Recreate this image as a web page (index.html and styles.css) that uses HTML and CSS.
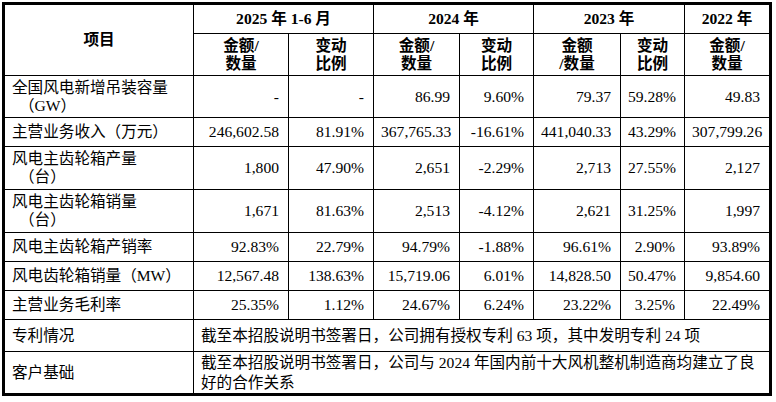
FILE: index.html
```html
<!DOCTYPE html>
<html lang="zh-CN">
<head>
<meta charset="utf-8">
<link rel="stylesheet" href="styles.css">
</head>
<body>
<table class="tbl">
  <colgroup>
    <col class="c1"><col class="c2"><col class="c3"><col class="c4"><col class="c5"><col class="c6"><col class="c7"><col class="c8">
  </colgroup>
  <tr class="h-top">
    <th rowspan="2">项目</th>
    <th colspan="2">2025 年 1-6 月</th>
    <th colspan="2">2024 年</th>
    <th colspan="2">2023 年</th>
    <th>2022 年</th>
  </tr>
  <tr class="h-sub">
    <th>金额/<br>数量</th>
    <th>变动<br>比例</th>
    <th>金额/<br>数量</th>
    <th>变动<br>比例</th>
    <th>金额<br>/数量</th>
    <th>变动<br>比例</th>
    <th>金额/<br>数量</th>
  </tr>
  <tr class="r2">
    <td class="name"><span class="ln">全国风电新增吊装容量</span><span class="ln open">（GW）</span></td>
    <td>-</td><td>-</td><td>86.99</td><td>9.60%</td><td>79.37</td><td>59.28%</td><td>49.83</td>
  </tr>
  <tr class="r1">
    <td class="name">主营业务收入（万元）</td>
    <td>246,602.58</td><td>81.91%</td><td>367,765.33</td><td>-16.61%</td><td>441,040.33</td><td>43.29%</td><td>307,799.26</td>
  </tr>
  <tr class="r2b">
    <td class="name"><span class="ln">风电主齿轮箱产量</span><span class="ln open">（台）</span></td>
    <td>1,800</td><td>47.90%</td><td>2,651</td><td>-2.29%</td><td>2,713</td><td>27.55%</td><td>2,127</td>
  </tr>
  <tr class="r2b">
    <td class="name"><span class="ln">风电主齿轮箱销量</span><span class="ln open">（台）</span></td>
    <td>1,671</td><td>81.63%</td><td>2,513</td><td>-4.12%</td><td>2,621</td><td>31.25%</td><td>1,997</td>
  </tr>
  <tr class="r1">
    <td class="name">风电主齿轮箱产销率</td>
    <td>92.83%</td><td>22.79%</td><td>94.79%</td><td>-1.88%</td><td>96.61%</td><td>2.90%</td><td>93.89%</td>
  </tr>
  <tr class="r1">
    <td class="name">风电齿轮箱销量（MW）</td>
    <td>12,567.48</td><td>138.63%</td><td>15,719.06</td><td>6.01%</td><td>14,828.50</td><td>50.47%</td><td>9,854.60</td>
  </tr>
  <tr class="r1">
    <td class="name">主营业务毛利率</td>
    <td>25.35%</td><td>1.12%</td><td>24.67%</td><td>6.24%</td><td>23.22%</td><td>3.25%</td><td>22.49%</td>
  </tr>
  <tr class="r-patent">
    <td class="name">专利情况</td>
    <td class="desc" colspan="7">截至本招股说明书签署日，公司拥有授权专利 63 项，其中发明专利 24 项</td>
  </tr>
  <tr class="r-client">
    <td class="name">客户基础</td>
    <td class="desc desc2" colspan="7">截至本招股说明书签署日，公司与 2024 年国内前十大风机整机制造商均建立了良<br>好的合作关系</td>
  </tr>
</table>
</body>
</html>
```

FILE: styles.css
```css
html, body {
  margin: 0;
  padding: 0;
  background: #fff;
}
body {
  padding: 2px;
  font-family: "Liberation Serif", "Noto Sans CJK SC", serif;
  font-size: 15.6px;
  color: #000;
}
.tbl {
  border-collapse: separate;
  border-spacing: 0;
  border: 3px solid #000;
  table-layout: fixed;
  width: 770px;
}
.c1 { width: 189px; }
.c2 { width: 95px; }
.c3 { width: 85px; }
.c4 { width: 86px; }
.c5 { width: 74px; }
.c6 { width: 87px; }
.c7 { width: 64px; }
.c8 { width: 84px; }

.tbl th,
.tbl td {
  border: 0;
  border-right: 1px solid #000;
  border-bottom: 1px solid #000;
  padding: 0 9px 0 7px;
  line-height: 18px;
  vertical-align: middle;
  white-space: nowrap;
}
.tbl tr > :last-child { border-right: 0; }
.tbl tr:last-child > * { border-bottom: 0; }

.tbl th {
  font-weight: bold;
  text-align: center;
  padding: 0 2px;
}
.tbl td {
  text-align: right;
}
.tbl td.name {
  text-align: left;
}
.ln {
  display: block;
}
.ln.open {
  padding-left: 7px;
}
.tbl td.desc {
  text-align: left;
  padding-left: 7px;
}
.tbl td.desc2 {
  line-height: 20px;
}

.h-top { height: 29px; }
.h-sub { height: 42px; }
.r2 { height: 42px; }
.r2b { height: 43px; }
.r1 { height: 29px; }
.r-patent { height: 32px; }
.r-client { height: 41px; }
```
